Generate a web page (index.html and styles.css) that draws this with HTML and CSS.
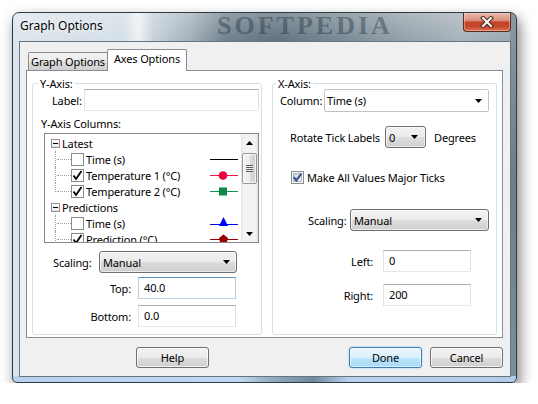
FILE: index.html
```html
<!DOCTYPE html>
<html>
<head>
<meta charset="utf-8">
<title>Graph Options</title>
<link rel="stylesheet" href="styles.css">
</head>
<body>
<div class="window">
  <div class="titlebar">
    <span class="title">Graph Options</span>
    <span class="wm-title">SOFTPEDIA</span>
    <div class="close">
      <svg width="14" height="12" viewBox="0 0 14 12">
        <path d="M3 2 L11 10 M11 2 L3 10" stroke="#4a2418" stroke-width="4" stroke-linecap="square"/>
        <path d="M3 2 L11 10 M11 2 L3 10" stroke="#ffffff" stroke-width="2" stroke-linecap="square"/>
      </svg>
    </div>
  </div>
  <div class="client">
    <div class="tabs">
      <div class="tab">Graph Options</div>
      <div class="tab active">Axes Options</div>
    </div>
    <div class="panel">
      <div class="group group-y">
        <div class="legend">Y-Axis:</div>
        <div class="row row-label">
          <span class="lbl lbl-label">Label:</span>
          <div class="field field-label"></div>
        </div>
        <div class="cols-label">Y-Axis Columns:</div>
        <div class="tree">
          <div class="tree-items">
            <div class="node">
              <span class="expander"><span class="minus"></span></span>
              <span class="node-text">Latest</span>
            </div>
            <div class="node child">
              <span class="branch"></span>
              <span class="cb"></span>
              <span class="node-text">Time (s)</span>
              <svg class="swatch" width="28" height="16" viewBox="0 0 28 16"><line x1="0" y1="8.5" x2="28" y2="8.5" stroke="#000" stroke-width="1"/></svg>
            </div>
            <div class="node child">
              <span class="branch"></span>
              <span class="cb"><svg width="11" height="11" viewBox="0 0 11 11"><path d="M1.5 5.5 L4 9 L9.5 1" fill="none" stroke="#000" stroke-width="1.8"/></svg></span>
              <span class="node-text">Temperature 1 (°C)</span>
              <svg class="swatch" width="28" height="16" viewBox="0 0 28 16"><line x1="0" y1="8.5" x2="28" y2="8.5" stroke="#e8174b" stroke-width="1"/><circle cx="13" cy="8.5" r="4.3" fill="#f0003c"/></svg>
            </div>
            <div class="node child">
              <span class="branch last"></span>
              <span class="cb"><svg width="11" height="11" viewBox="0 0 11 11"><path d="M1.5 5.5 L4 9 L9.5 1" fill="none" stroke="#000" stroke-width="1.8"/></svg></span>
              <span class="node-text">Temperature 2 (°C)</span>
              <svg class="swatch" width="28" height="16" viewBox="0 0 28 16"><line x1="0" y1="8.5" x2="28" y2="8.5" stroke="#0a9450" stroke-width="1"/><rect x="9" y="4.5" width="8" height="8" fill="#0a8a46"/></svg>
            </div>
            <div class="node">
              <span class="expander"><span class="minus"></span></span>
              <span class="node-text">Predictions</span>
            </div>
            <div class="node child">
              <span class="branch"></span>
              <span class="cb"></span>
              <span class="node-text">Time (s)</span>
              <svg class="swatch" width="28" height="16" viewBox="0 0 28 16"><line x1="0" y1="9.5" x2="28" y2="9.5" stroke="#0000ff" stroke-width="1"/><polygon points="13.5,2 9,11 18,11" fill="#0000ff"/></svg>
            </div>
            <div class="node child">
              <span class="branch"></span>
              <span class="cb"><svg width="11" height="11" viewBox="0 0 11 11"><path d="M1.5 5.5 L4 9 L9.5 1" fill="none" stroke="#000" stroke-width="1.8"/></svg></span>
              <span class="node-text">Prediction (°C)</span>
              <svg class="swatch" width="28" height="16" viewBox="0 0 28 16"><line x1="0" y1="8.5" x2="28" y2="8.5" stroke="#9b0000" stroke-width="1"/><polygon points="13.5,3.5 18,7 17,11 10,11 9,7" fill="#9b0000"/></svg>
            </div>
          </div>
          <div class="scrollbar">
            <div class="sb-btn"><svg width="7" height="4" viewBox="0 0 7 4"><polygon points="3.5,0 7,4 0,4" fill="#000"/></svg></div>
            <div class="sb-track">
              <div class="sb-thumb"><span class="grip"></span></div>
            </div>
            <div class="sb-btn"><svg width="7" height="4" viewBox="0 0 7 4"><polygon points="0,0 7,0 3.5,4" fill="#000"/></svg></div>
          </div>
        </div>
        <div class="row row-scaling-y">
          <span class="lbl lbl-scaling-y">Scaling:</span>
          <div class="select select-y"><span>Manual</span><svg width="7" height="4" viewBox="0 0 7 4"><polygon points="0,0 7,0 3.5,4" fill="#000"/></svg></div>
        </div>
        <div class="row row-top">
          <span class="lbl lbl-num-y">Top:</span>
          <div class="field field-num-y focus">40.0</div>
        </div>
        <div class="row row-bottom">
          <span class="lbl lbl-num-y">Bottom:</span>
          <div class="field field-num-y">0.0</div>
        </div>
      </div>

      <div class="group group-x">
        <div class="legend legend-x">X-Axis:</div>
        <div class="row row-column">
          <span class="lbl lbl-column">Column:</span>
          <div class="combo"><span>Time (s)</span><svg width="7" height="4" viewBox="0 0 7 4"><polygon points="0,0 7,0 3.5,4" fill="#000"/></svg></div>
        </div>
        <div class="row row-rotate">
          <span class="lbl lbl-rotate">Rotate Tick Labels</span>
          <div class="select select-small"><span>0</span><svg width="7" height="4" viewBox="0 0 7 4"><polygon points="0,0 7,0 3.5,4" fill="#000"/></svg></div>
          <span class="degrees">Degrees</span>
        </div>
        <div class="row row-check">
          <svg class="themed-cb" width="13" height="13" viewBox="0 0 13 13">
            <defs>
              <linearGradient id="cbg" x1="0" y1="0" x2="1" y2="1">
                <stop offset="0" stop-color="#cfd3d8"/>
                <stop offset="1" stop-color="#f7f8f9"/>
              </linearGradient>
            </defs>
            <rect x="0.5" y="0.5" width="12" height="12" fill="#f6f6f6" stroke="#8e8f8f"/>
            <rect x="2.5" y="2.5" width="8" height="8" fill="url(#cbg)" stroke="#b4b8bc"/>
            <path d="M2.8 6.2 L5.3 9.4 L10.4 2.6" fill="none" stroke="#3b5593" stroke-width="2.1"/>
          </svg>
          <span class="check-text">Make All Values Major Ticks</span>
        </div>
        <div class="row row-scaling-x">
          <span class="lbl lbl-scaling-x">Scaling:</span>
          <div class="select select-x"><span>Manual</span><svg width="7" height="4" viewBox="0 0 7 4"><polygon points="0,0 7,0 3.5,4" fill="#000"/></svg></div>
        </div>
        <div class="row row-left">
          <span class="lbl lbl-num-x">Left:</span>
          <div class="field field-num-x">0</div>
        </div>
        <div class="row row-right">
          <span class="lbl lbl-num-x">Right:</span>
          <div class="field field-num-x">200</div>
        </div>
      </div>
    </div>
    <div class="buttons">
      <div class="btn btn-help">Help</div>
      <div class="btn btn-done">Done</div>
      <div class="btn btn-cancel">Cancel</div>
    </div>
  </div>
</div>
</body>
</html>
```

FILE: styles.css
```css
* { box-sizing: border-box; }

html, body {
  margin: 0;
  padding: 0;
  background: #ffffff;
}

body {
  padding: 12px 0 0 12px;
  font-family: "Noto Sans", "Open Sans", "Liberation Sans", sans-serif;
  font-size: 11px;
  letter-spacing: -0.15px;
  color: #000;
}

/* ---------- window frame ---------- */
.window {
  position: relative;
  width: 505px;
  height: 371px;
  border: 1px solid #2e3b45;
  border-radius: 7px 7px 5px 5px;
  display: flex;
  flex-direction: column;
  overflow: hidden;
  box-shadow: 3px 6px 14px rgba(0, 0, 0, 0.5);
  background:
    linear-gradient(90deg, #b6d2ef 0, #c0d8f1 225px, #90a8be 262px, #6f889f 300px, #b8d2ec 335px, #b0cce8 100%) bottom / 100% 6px no-repeat,
    linear-gradient(180deg, #8a98a2 0, #6d7d89 45%, #7d8f9d 100%) right / 6px 100% no-repeat,
    linear-gradient(180deg, rgba(255, 255, 255, 0.25), rgba(255, 255, 255, 0) 30px),
    linear-gradient(90deg, #dbe4ec 0, #d3dee7 110px, #edf1f4 126px, #c6d1da 140px, #a0aeb9 178px, #6e7f8b 212px, #5e707d 262px, #778893 330px, #95a2ab 400px, #a6b1b9 450px, #98a5ae 100%);
}

.titlebar {
  position: relative;
  height: 28px;
  display: flex;
  align-items: flex-start;
  flex: none;
}

.title {
  margin: 5px 0 0 7px;
  line-height: 16px;
  font-size: 12px;
  letter-spacing: 0;
  color: #000;
  text-shadow: 0 0 6px rgba(255, 255, 255, 0.9), 0 0 2px rgba(255, 255, 255, 0.8);
  position: relative;
  z-index: 1;
}

.wm-title {
  position: absolute;
  left: 204px;
  top: 0;
  height: 28px;
  line-height: 26px;
  font-family: "Liberation Serif", "DejaVu Serif", serif;
  font-weight: bold;
  font-size: 26px;
  letter-spacing: 3px;
  color: rgba(25, 40, 52, 0.4);
}

.close {
  margin-left: auto;
  margin-right: 5px;
  width: 48px;
  height: 19px;
  border: 1px solid #5a2c22;
  border-top: none;
  border-radius: 0 0 4px 4px;
  background: linear-gradient(180deg, #e9b9ac 0, #d9917f 40%, #c4432a 52%, #c6482b 75%, #d8714f 100%);
  box-shadow: inset 0 0 0 1px rgba(255, 220, 210, 0.45);
  display: flex;
  align-items: center;
  justify-content: center;
  position: relative;
  z-index: 1;
}

/* ---------- client area ---------- */
.client {
  flex: 1;
  margin: 0 5px 5px 6px;
  border: 1px solid #66757f;
  background: #f0f0f0;
  display: flex;
  flex-direction: column;
  padding: 7px 7px 0 6px;
}

.tabs {
  height: 21px;
  display: flex;
  align-items: flex-end;
  padding-left: 2px;
  flex: none;
}

.tab {
  width: 80px;
  height: 18px;
  border: 1px solid #898c95;
  border-bottom: none;
  border-radius: 2px 2px 0 0;
  background: linear-gradient(180deg, #f2f2f2 0, #ebebeb 50%, #dddddd 51%, #cfcfcf 100%);
  text-align: center;
  line-height: 17px;
}

.tab.active {
  position: relative;
  z-index: 1;
  height: 22px;
  margin-left: -1px;
  margin-bottom: -1px;
  background: #ffffff;
  line-height: 18px;
}

.panel {
  height: 268px;
  border: 1px solid #898c95;
  background: #ffffff;
  display: flex;
  gap: 10px;
  padding: 0 5px;
  flex: none;
}

.group {
  margin-top: 12px;
  height: 252px;
  border: 1px solid #d5dfe5;
  border-radius: 3px;
  display: flex;
  flex-direction: column;
  align-items: flex-start;
}

.group-y { width: 230px; }
.group-x { width: 225px; }

.legend {
  margin: -8px 0 0 5px;
  padding: 0 2px;
  height: 15px;
  line-height: 15px;
  background: #ffffff;
}

.legend-x { margin-left: 3px; }

.row {
  display: flex;
  align-items: center;
  flex: none;
}

.lbl { flex: none; white-space: nowrap; }

/* text fields */
.field {
  height: 22px;
  border: 1px solid;
  border-color: #abadb3 #dbdfe6 #e3e9ef #e2e3ea;
  background: #ffffff;
  padding-left: 5px;
  line-height: 19px;
}

.field.focus {
  border-color: #5c93bc #b3cde2 #b9d5ea #b3cde2;
}

/* button-like dropdown */
.select {
  height: 22px;
  border: 1px solid #707070;
  border-radius: 3px;
  background: linear-gradient(180deg, #f2f2f2 0, #ebebeb 50%, #dddddd 51%, #cfcfcf 100%);
  box-shadow: inset 0 0 0 1px rgba(255, 255, 255, 0.6);
  display: flex;
  align-items: center;
  justify-content: space-between;
  padding: 0 6px 0 3px;
}

.combo {
  width: 165px;
  height: 23px;
  border: 1px solid #bcc4cc;
  border-radius: 2px;
  background: #ffffff;
  display: flex;
  align-items: center;
  justify-content: space-between;
  padding: 0 6px 0 2px;
}

/* ---------- Y axis group ---------- */
.row-label { margin-top: -2px; }
.lbl-label { width: 51px; padding-left: 19px; }
.field-label { width: 175px; }

.cols-label {
  margin: 5px 0 0 8px;
  line-height: 16px;
}

.tree {
  margin: 1px 0 0 11px;
  width: 215px;
  height: 110px;
  border: 1px solid #828790;
  background: #ffffff;
  display: flex;
  overflow: hidden;
}

.tree-items {
  flex: 1;
  padding: 1px 3px 0 0;
  overflow: hidden;
}

.node {
  height: 16px;
  display: flex;
  align-items: center;
  white-space: nowrap;
}

.expander {
  margin-left: 6px;
  width: 9px;
  height: 9px;
  border: 1px solid #919191;
  background: linear-gradient(180deg, #ffffff, #e6e6e6);
  display: flex;
  align-items: center;
  justify-content: center;
  flex: none;
}

.minus {
  width: 5px;
  height: 1px;
  background: #000;
}

.node .node-text { margin-left: 2px; }

.branch {
  position: relative;
  width: 26px;
  height: 16px;
  flex: none;
}

.branch::before {
  content: "";
  position: absolute;
  left: 10px;
  top: 0;
  height: 16px;
  border-left: 1px dotted #a0a0a0;
}

.branch.last::before { height: 9px; }

.branch::after {
  content: "";
  position: absolute;
  left: 12px;
  top: 8px;
  width: 14px;
  border-top: 1px dotted #a0a0a0;
}

.cb {
  width: 13px;
  height: 13px;
  border: 1px solid #8a8a8a;
  background: #ffffff;
  display: flex;
  align-items: center;
  justify-content: center;
  flex: none;
}

.swatch {
  margin-left: auto;
  flex: none;
}

.scrollbar {
  width: 17px;
  flex: none;
  display: flex;
  flex-direction: column;
  background: linear-gradient(90deg, #e3e3e3 0, #f3f3f3 15%, #f3f3f3 85%, #e3e3e3 100%);
}

.sb-btn {
  height: 17px;
  display: flex;
  align-items: center;
  justify-content: center;
  flex: none;
}

.sb-track {
  flex: 1;
  padding: 2px 1px 0 1px;
}

.sb-thumb {
  height: 31px;
  border: 1px solid #979797;
  border-radius: 2px;
  background: linear-gradient(90deg, #f4f4f4 0, #ececec 50%, #dcdcdc 51%, #d2d2d2 100%);
  box-shadow: inset 0 0 0 1px rgba(255, 255, 255, 0.7);
  display: flex;
  align-items: center;
  justify-content: center;
}

.grip {
  width: 7px;
  height: 7px;
  background: repeating-linear-gradient(180deg, #5a5a5a 0, #5a5a5a 1px, #f0f0f0 1px, #f0f0f0 2px);
}

.row-scaling-y { margin-top: 8px; }
.lbl-scaling-y { width: 66px; padding-left: 20px; }
.select-y { width: 138px; }

.row-top { margin-top: 4px; }
.row-bottom { margin-top: 6px; }
.lbl-num-y { width: 105px; padding-right: 7px; text-align: right; }
.field-num-y { width: 98px; }

/* ---------- X axis group ---------- */
.row-column { margin-top: -2px; }
.lbl-column { width: 51px; padding-left: 7px; }

.row-rotate { margin-top: 14px; }
.lbl-rotate { width: 112px; padding-left: 17px; }
.select-small { width: 41px; padding-left: 3px; padding-right: 7px; }
.degrees { margin-left: 8px; }

.row-check { margin: 21px 0 0 18px; height: 16px; }
.check-text { margin-left: 3px; }

.row-scaling-x { margin-top: 24px; }
.lbl-scaling-x { width: 77px; padding-left: 35px; }
.select-x { width: 139px; }

.row-left { margin-top: 19px; }
.row-right { margin-top: 12px; }
.lbl-num-x { width: 110px; padding-right: 10px; text-align: right; }
.field-num-x { width: 88px; }

/* ---------- buttons ---------- */
.buttons {
  margin-top: 9px;
  display: flex;
  flex: none;
}

.btn {
  width: 73px;
  height: 21px;
  border: 1px solid #707070;
  border-radius: 3px;
  background: linear-gradient(180deg, #f2f2f2 0, #ebebeb 50%, #dddddd 51%, #cfcfcf 100%);
  box-shadow: inset 0 0 0 1px rgba(255, 255, 255, 0.7);
  text-align: center;
  line-height: 19px;
}

.btn-help { margin-left: 110px; }

.btn-done {
  margin-left: auto;
  border-color: #3c7fb1;
  background: linear-gradient(180deg, #eaf6fd 0, #d9f0fc 50%, #bee6fd 51%, #a7d9f5 100%);
  box-shadow: inset 0 0 0 1px rgba(255, 255, 255, 0.6), 0 0 2px #7fd0f5;
}

.btn-cancel { margin-left: 8px; }
```
